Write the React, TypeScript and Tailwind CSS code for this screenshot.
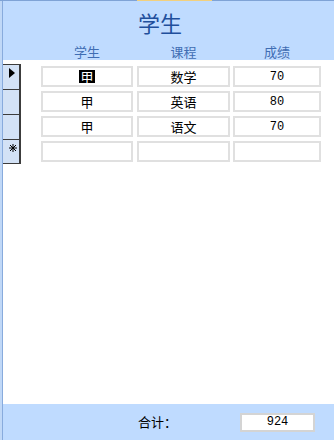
import React from 'react';

const rows = [
  { name: '甲', course: '数学', score: '70', current: true },
  { name: '甲', course: '英语', score: '80' },
  { name: '甲', course: '语文', score: '70' },
];

const cjk = "font-['Noto_Sans_CJK_SC',sans-serif]";
const mono = "font-['Liberation_Mono',monospace]";

function Selector({ kind, last }: { kind?: 'current' | 'new'; last?: boolean }) {
  return (
    <div
      className={`w-[18px] h-[25px] bg-[#d3e2f6] border-t border-r-2 border-[#3c3c3c] pl-[6px] pt-[3px] ${last ? 'border-b' : ''}`}
    >
      {kind === 'current' && (
        <svg width="7" height="10" viewBox="0 0 7 10">
          <polygon points="0,0 6,5 0,10" fill="#000" />
        </svg>
      )}
      {kind === 'new' && (
        <svg width="8" height="8" viewBox="0 0 8 8" className="mt-[1px]">
          <g stroke="#000" strokeWidth="1">
            <line x1="4" y1="0" x2="4" y2="8" />
            <line x1="0" y1="4" x2="8" y2="4" />
            <line x1="1" y1="1" x2="7" y2="7" />
            <line x1="7" y1="1" x2="1" y2="7" />
          </g>
        </svg>
      )}
    </div>
  );
}

function Box({ w, children, num }: { w: string; children?: React.ReactNode; num?: boolean }) {
  return (
    <div
      className={`${w} h-[21px] mt-[2px] border-2 border-[#e0e0e0] bg-white flex items-center justify-center text-black ${num ? `${mono} text-[12px]` : `${cjk} text-[13px]`} leading-none`}
    >
      {children}
    </div>
  );
}

export default function App() {
  return (
    <div className="w-[334px] h-[440px] flex flex-col bg-white overflow-hidden">
      <div className="flex h-px shrink-0">
        <div className="w-[137px] bg-[#7fa3d6]" />
        <div className="w-[75px] bg-[#f2d07e]" />
        <div className="flex-1 bg-[#7fa3d6]" />
      </div>
      <div className="flex flex-1 min-h-0">
        <div className="w-[2px] bg-[#c0d8f7]" />
        <div className="w-px bg-[#88abdd]" />
        <div className="flex-1 flex flex-col">
          {/* form header */}
          <div className={`h-[59px] shrink-0 bg-[#bfdbff] ${cjk}`}>
            <div className="pt-[10px] pl-[135px] text-[22px] leading-[22px] text-[#1f4f9c]">学生</div>
            <div className="flex mt-[12px] pl-[38px] text-[13px] leading-[13px] text-[#3f6db3]">
              <div className="w-[92px] text-center">学生</div>
              <div className="w-[93px] ml-[4px] text-center">课程</div>
              <div className="w-[88px] ml-[3px] text-center">成绩</div>
            </div>
          </div>

          {/* detail */}
          <div className="flex-1 pt-[4px]">
            {rows.map((r, i) => (
              <div key={i} className="flex h-[25px]">
                <Selector kind={r.current ? 'current' : undefined} />
                <div className="ml-[20px]">
                  <Box w="w-[92px]">
                    {r.current ? <span className="bg-black text-white px-px">{r.name}</span> : r.name}
                  </Box>
                </div>
                <div className="ml-[4px]">
                  <Box w="w-[93px]">{r.course}</Box>
                </div>
                <div className="ml-[3px]">
                  <Box w="w-[88px]" num>{r.score}</Box>
                </div>
              </div>
            ))}
            <div className="flex h-[25px]">
              <Selector kind="new" last />
              <div className="ml-[20px]">
                <Box w="w-[92px]" />
              </div>
              <div className="ml-[4px]">
                <Box w="w-[93px]" />
              </div>
              <div className="ml-[3px]">
                <Box w="w-[88px]" num />
              </div>
            </div>
          </div>

          {/* form footer */}
          <div className="h-[36px] shrink-0 bg-[#bfdbff] flex items-center pl-[135px]">
            <span className={`w-[102px] ${cjk} text-[13px] text-black`}>合计：</span>
            <div className={`w-[75px] h-[19px] border-2 border-[#d4d4d4] bg-white flex items-center justify-center ${mono} text-[12px] text-black`}>
              924
            </div>
          </div>
        </div>
      </div>
    </div>
  );
}
